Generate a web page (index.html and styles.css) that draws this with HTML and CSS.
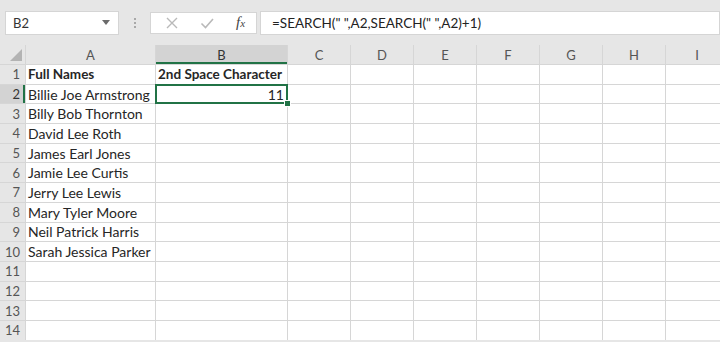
FILE: index.html
```html
<!DOCTYPE html>
<html lang="en">
<head>
<meta charset="UTF-8">
<title>Book1 - Excel</title>
<link rel="stylesheet" href="styles.css">
</head>
<body>
<div class="formula-row">
    <div class="name-box">
        <span>B2</span>
        <svg class="caret" width="8" height="5" viewBox="0 0 8 5"><path d="M0 0h8L4 5z" fill="#6b6b6b"/></svg>
    </div>
    <div class="grip"><i></i><i></i><i></i></div>
    <div class="fx-buttons">
        <svg width="14" height="14" viewBox="0 0 14 14"><path d="M2 2l10 10M12 2L2 12" stroke="#b9b9b9" stroke-width="1.4" fill="none"/></svg>
        <svg width="14" height="14" viewBox="0 0 14 14"><path d="M1.5 7.5l4 4L13 3" stroke="#b9b9b9" stroke-width="1.6" fill="none"/></svg>
        <span class="fx">f<small>x</small></span>
    </div>
    <div class="formula">=SEARCH(" ",A2,SEARCH(" ",A2)+1)</div>
</div>

<div class="sheet">
    <div class="corner"><span class="tri"></span></div>
    <div class="col-head">A</div>
    <div class="col-head active">B</div>
    <div class="col-head">C</div>
    <div class="col-head">D</div>
    <div class="col-head">E</div>
    <div class="col-head">F</div>
    <div class="col-head">G</div>
    <div class="col-head">H</div>
    <div class="col-head">I</div>
</div>
<div class="sheet body" id="rows"></div>

<script>
    var names = ['Full Names', 'Billie Joe Armstrong', 'Billy Bob Thornton', 'David Lee Roth',
        'James Earl Jones', 'Jamie Lee Curtis', 'Jerry Lee Lewis', 'Mary Tyler Moore',
        'Neil Patrick Harris', 'Sarah Jessica Parker'];
    var rows = document.getElementById('rows');
    for (var r = 1; r <= 14; r++) {
        var head = document.createElement('div');
        head.className = 'row-head' + (r == 2 ? ' active' : '');
        head.textContent = r;
        rows.appendChild(head);
        for (var c = 0; c < 9; c++) {
            var cell = document.createElement('div');
            cell.className = 'cell';
            if (c == 0 && names[r - 1]) cell.textContent = names[r - 1];
            if (r == 1 && c == 1) cell.textContent = '2nd Space Character';
            if (r == 1) cell.className += ' bold';
            if (r == 2 && c == 1) {
                cell.className += ' num selected';
                cell.innerHTML = '11<span class="handle"></span>';
            }
            rows.appendChild(cell);
        }
    }
</script>
</body>
</html>
```
FILE: styles.css
```css
body {
    margin: 0;
    background: #e6e6e6;
    font-family: Lato, "Open Sans", sans-serif;
    width: 720px;
    height: 342px;
    overflow: hidden;
}

/* formula bar */
.formula-row {
    display: flex;
    align-items: center;
    height: 45px;
    padding-left: 5px;
}
.name-box, .fx-buttons, .formula {
    height: 22px;
    background: #fff;
    border: 1px solid #d5d5d5;
    display: flex;
    align-items: center;
    font-size: 13px;
    color: #333;
}
.name-box {
    padding: 0 8px 0 7px;
    justify-content: space-between;
    width: 97px;
}
.grip {
    width: 31px;
    display: flex;
    flex-direction: column;
    align-items: center;
    gap: 2px;
}
.grip i {
    width: 2px;
    height: 2px;
    background: #a8a8a8;
}
.fx-buttons {
    width: 107px;
    padding-left: 14px;
    box-sizing: border-box;
    gap: 21px;
}
.fx {
    font-family: "Liberation Serif", serif;
    font-style: italic;
    font-size: 15px;
    color: #444;
    margin-left: 1px;
}
.fx small { font-size: 11px; }
.formula {
    flex: 1;
    margin-left: 3px;
    padding-left: 11px;
    font-size: 13.5px;
    color: #222;
}

/* grid */
.sheet {
    display: grid;
    grid-template-columns: 25px 129px 131px repeat(7, 62px);
    gap: 1px;
    background: #d6d6d6;
}
.sheet:first-of-type { background: #c8c8c8; }
.body {
    grid-auto-rows: 18.7px;
    padding-top: 1px;
}
.col-head, .corner {
    height: 19px;
    background: #e6e6e6;
    font-size: 13px;
    color: #555;
    display: flex;
    align-items: center;
    justify-content: center;
}
.corner { position: relative; }
.tri {
    position: absolute;
    right: 3px;
    bottom: 3px;
    border-style: solid;
    border-width: 0 0 12px 12px;
    border-color: transparent transparent #b3b3b3 transparent;
}
.col-head.active {
    background: #d3d3d3;
    box-shadow: inset 0 -2px 0 #217346;
    color: #333;
}
.row-head {
    background: #e6e6e6;
    font-size: 13px;
    color: #555;
    display: flex;
    align-items: center;
    justify-content: flex-end;
    padding-right: 5px;
}
.row-head.active {
    background: #d3d3d3;
    box-shadow: inset -2px 0 0 #217346;
    color: #333;
}
.cell {
    background: #fff;
    font-size: 14px;
    color: #262626;
    display: flex;
    align-items: center;
    padding-left: 2px;
    white-space: nowrap;
}
.cell.bold {
    font-weight: bold;
    font-size: 13.5px;
}
.cell.num {
    justify-content: flex-end;
    padding-right: 3px;
}
.selected {
    position: relative;
    outline: 2px solid #217346;
    outline-offset: -1px;
    z-index: 1;
}
.handle {
    position: absolute;
    right: -4px;
    bottom: -4px;
    width: 5px;
    height: 5px;
    background: #217346;
    border: 1px solid #fff;
}
```
